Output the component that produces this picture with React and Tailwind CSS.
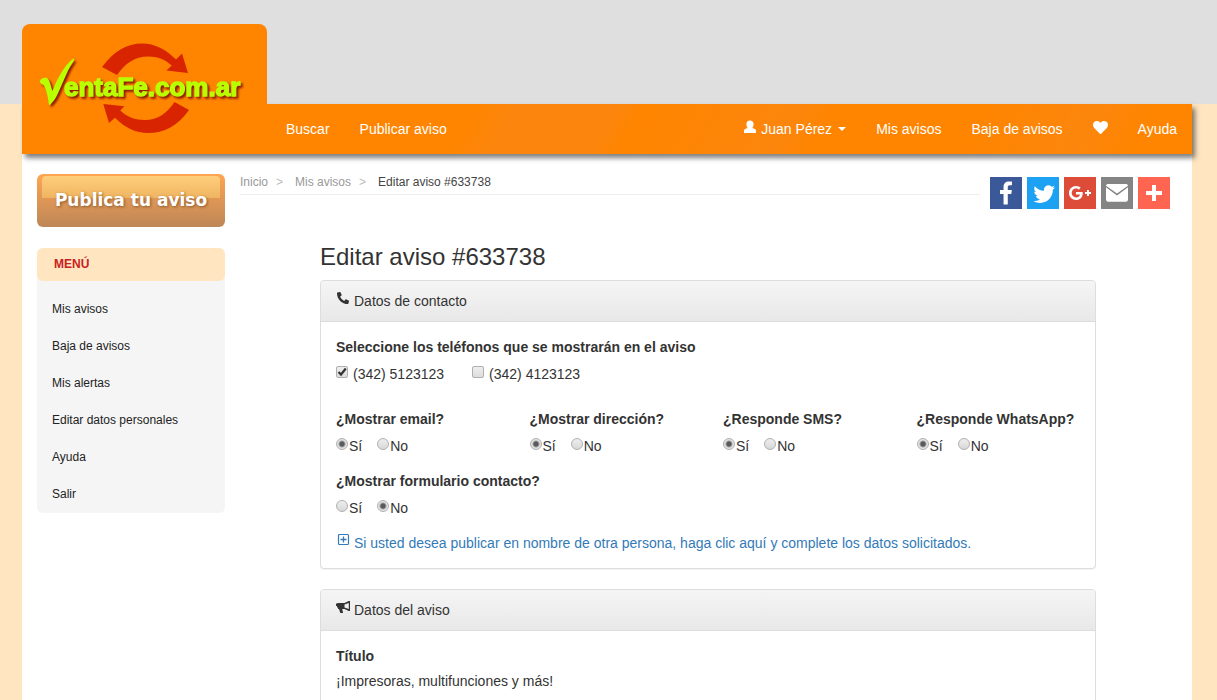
import { FaHeart, FaPhoneAlt } from "react-icons/fa";

const menu = ["Mis avisos", "Baja de avisos", "Mis alertas", "Editar datos personales", "Ayuda", "Salir"];

const share = [
  {
    name: "Facebook",
    color: "bg-[#3b5998]",
    box: "0 0 32 32",
    d: "M17.78 27.5V17.008h3.522l.527-4.09h-4.05v-2.61c0-1.182.33-1.99 2.023-1.99h2.166V4.66c-.375-.05-1.66-.16-3.155-.16-3.123 0-5.26 1.905-5.26 5.405v3.016h-3.53v4.09h3.53V27.5h4.223z",
  },
  {
    name: "Twitter",
    color: "bg-[#1da1f2]",
    box: "-3 -3 35.4 35.4",
    d: "M28 8.557a9.913 9.913 0 0 1-2.828.775 4.93 4.93 0 0 0 2.166-2.725 9.738 9.738 0 0 1-3.13 1.194 4.92 4.92 0 0 0-3.593-1.55 4.924 4.924 0 0 0-4.794 6.049c-4.09-.21-7.72-2.17-10.15-5.15a4.942 4.942 0 0 0-.665 2.477c0 1.71.87 3.214 2.19 4.1a4.968 4.968 0 0 1-2.23-.616v.06c0 2.39 1.7 4.38 3.952 4.83-.414.115-.85.174-1.297.174-.318 0-.626-.03-.928-.086a4.935 4.935 0 0 0 4.6 3.42 9.893 9.893 0 0 1-6.114 2.107c-.398 0-.79-.023-1.175-.068a13.953 13.953 0 0 0 7.55 2.213c9.056 0 14.01-7.507 14.01-14.013 0-.213-.005-.426-.015-.637.96-.695 1.795-1.56 2.455-2.55z",
  },
  {
    name: "Google+",
    color: "bg-[#dd4b39]",
    box: "0 0 32 32",
    d: "M27 15h-2v-2h-2v2h-2v2h2v2h2v-2h2m-15-2v2.4h3.97c-.16 1.03-1.2 3.02-3.97 3.02-2.39 0-4.34-1.98-4.34-4.42s1.95-4.42 4.34-4.42c1.36 0 2.27.58 2.79 1.08l1.9-1.83C15.47 9.69 13.89 9 12 9c-3.87 0-7 3.13-7 7s3.13 7 7 7c4.04 0 6.72-2.84 6.72-6.84 0-.46-.05-.81-.11-1.16H12z",
  },
  {
    name: "Email",
    color: "bg-[#848484]",
    box: "0 0 32 32",
    d: "M5 10.2V22.500a2.300 2.300 0 0 0 2.300 2.300h17.400a2.300 2.300 0 0 0 2.300-2.300V10.200l-11 8.400zM5 8.700l11 7.900 11-7.900C26.800 7.600 26 7 24.800 7H7.200C6 7 5.200 7.600 5 8.700z",
  },
  { name: "Compartir", color: "bg-[#ff6550]", box: "0 0 32 32", d: "M14 8h4v6h6v4h-6v6h-4v-6H8v-4h6z" },
];

function Logo() {
  return (
    <svg viewBox="0 0 245 130" className="block w-full h-full" role="img" aria-label="VentaFe.com.ar">
      <path fill="#d82400" d="M80 43C92 27 105 19.500 120 19.500c13 0 24 6 34 16l6-6 6 19.500-21.500-2.500 5.200-5C143 35.500 136 32.500 126 32.500c-13 0-23 7-31 18.500z" />
      <path fill="#d82400" d="M81.300 80l21 2.300-4 4.200C105 93 113 96 123 96c13 0 22-7 29.500-18l14.500 8c-11 16-25 23-41 23-12 0-23-5-33-15.300L87 99z" />
      <g className="[filter:drop-shadow(2px_2px_1px_#8b1a00)]">
        <path fill="#b9ff00" d="M18 57c0-2 5-4 7-3 3 2 4 9 5.500 13C35 55 43 41 50 35.500c1.500-1 2.500-1 2 .5-1 3-4 6-7 13-5 11-9 21-12 26-2 3-4 5-6 6.500-1-9-3-17-5.500-20.500-1.500-1-3.500-1-3.500-4z" />
        <text x="42" y="72" fill="#b9ff00" stroke="#b9ff00" strokeWidth="1.400" className="text-[26px] font-bold">entaFe.com.ar</text>
      </g>
    </svg>
  );
}

function UserIcon() {
  return (
    <svg viewBox="0 0 14 14" className="size-[14px]" fill="currentColor" aria-hidden="true">
      <path d="M7 .5c2.200 0 3.600 1.500 3.600 3.700 0 1.500-.5 2.800-1.300 3.700l2.700 1.200c.7.400 1 .9 1 1.600V13H1v-2.300c0-.7.300-1.200 1-1.600l2.700-1.200C3.900 7 3.400 5.700 3.400 4.200 3.400 2 4.800.5 7 .5z" />
    </svg>
  );
}

function BullhornIcon() {
  return (
    <svg viewBox="0 0 14 14" className="size-[14px]" fill="currentColor" aria-hidden="true">
      <path fillRule="evenodd" d="M14 1v10h-1.200L8.500 9H6.200l.9 4H4.300L3 9H2V7.500H1V6H0V3.500h1.500V3h7L12.800 1zM12.800 3 8.500 4.500v3l4.300 1.600z" />
    </svg>
  );
}

function PlusBoxIcon() {
  return (
    <svg viewBox="0 0 14 14" className="size-[14px]" fill="none" stroke="currentColor" aria-hidden="true">
      <rect x="2.500" y="1.500" width="10" height="10" rx="1" strokeWidth="1.200" />
      <path d="M7.500 3.500v6M4.500 6.500h6" strokeWidth="1.300" />
    </svg>
  );
}

function NavLink({ children, label }) {
  return (
    <a href="#" aria-label={label} className="flex items-center h-[50px] px-[15px] text-white">
      {children}
    </a>
  );
}

function Check({ children, checked }) {
  return (
    <label className="flex items-start gap-[5px]">
      <span className="relative mt-0.5 size-3">
        <input type="checkbox" defaultChecked={checked} className="peer block appearance-none size-3 rounded-xs border border-[#b0b0b0] bg-linear-to-b from-[#eee] to-[#ddd]" />
        <svg viewBox="0 0 12 12" className="hidden peer-checked:block absolute inset-0 pointer-events-none" fill="none" stroke="#333" strokeWidth="2.200">
          <path d="M2.500 6l2.500 2.500L9.800 2.500" />
        </svg>
      </span>
      {children}
    </label>
  );
}

function YesNo({ title, name, value = "Sí" }) {
  return (
    <fieldset className="px-[15px] pb-[15px]">
      <legend className="font-bold mb-[7px] whitespace-nowrap">{title}</legend>
      <div className="flex gap-[15px]">
        {["Sí", "No"].map((opt) => (
          <label key={opt} className="flex items-start gap-px">
            <input
              type="radio"
              name={name}
              defaultChecked={opt === value}
              className="appearance-none mt-0.5 size-3 rounded-full border border-[#b0b0b0] bg-linear-to-b from-[#eee] to-[#d8d8d8] checked:bg-[radial-gradient(circle,#5a5a5a_2px,#e4e4e4_4px)]"
            />
            {opt}
          </label>
        ))}
      </div>
    </fieldset>
  );
}

function Panel({ icon, title, children }) {
  return (
    <section className="mb-5 bg-white border border-[#ddd] rounded shadow-[0_1px_1px_rgba(0,0,0,0.05)]">
      <h2 className="flex items-start gap-1 px-[15px] py-[10px] rounded-t border-b border-[#ddd] bg-linear-to-b from-[#f5f5f5] to-[#e8e8e8]">
        {icon}
        {title}
      </h2>
      <div className="p-[15px]">{children}</div>
    </section>
  );
}

export default function App() {
  return (
    <div className="min-h-screen flex flex-col overflow-x-clip bg-[#ffe6c1] text-[#333] text-[14px] leading-5 font-['Liberation_Sans',Arial,sans-serif]">
      <div className="h-[104px] bg-[#dfdfdf]" />
      <div className="flex-1 pl-[22px] pr-[25px] flex flex-col">
        <header className="relative z-10 flex items-start h-[50px] shadow-[3px_4px_5px_rgba(0,0,0,0.5)] bg-[linear-gradient(120deg,#ff8500_38%,#fc860d_41%_50%,#ff8500_52%,#fc860d_65%,#ff8500_68%_80%,#fc860d_90%,#ff8500_95%)]">
          <a href="#" className="w-[245px] h-[130px] -mt-20 rounded-t-lg bg-[#ff8500]">
            <Logo />
          </a>
          <nav className="flex flex-1 justify-between pl-1">
            <div className="flex">
              <NavLink>Buscar</NavLink>
              <NavLink>Publicar aviso</NavLink>
            </div>
            <div className="flex">
              <button type="button" className="flex items-center h-[50px] px-[15px] gap-1 text-white">
                <span className="pb-1"><UserIcon /></span>
                Juan Pérez
                <span className="ml-0.5 border-x-4 border-t-4 border-x-transparent border-t-white" />
              </button>
              <NavLink>Mis avisos</NavLink>
              <NavLink>Baja de avisos</NavLink>
              <NavLink label="Favoritos"><FaHeart className="mb-1" size={15} /></NavLink>
              <NavLink>Ayuda</NavLink>
            </div>
          </nav>
        </header>

        <div className="flex-1 flex items-start gap-[15px] bg-white px-[15px] pt-5">
          <aside className="w-[188px] shrink-0">
            <button type="button" className="block w-full h-[53px] px-[5px] py-0.5 rounded-md bg-linear-to-b from-[#ffa552] to-[#bd8757]">
              <span className="block h-full rounded bg-[linear-gradient(#ffcf7c,#efb461)] bg-[length:100%_22px] bg-no-repeat text-white text-[17px] leading-[48px] font-bold font-['DejaVu_Sans',sans-serif] [text-shadow:1px_1px_3px_#8a5a2a]">
                Publica tu aviso
              </span>
            </button>
            <div className="mt-[21px] rounded-md bg-[#f5f5f5] text-[12px] text-[#222]">
              <h3 className="h-[33px] px-[17px] leading-8 rounded-md bg-[#ffe6c1] text-[#c9211e] font-bold">MENÚ</h3>
              <ul className="pt-[10px]">
                {menu.map((item) => (
                  <li key={item}>
                    <a href="#" className="block px-[15px] leading-[37px]">{item}</a>
                  </li>
                ))}
              </ul>
            </div>
          </aside>

          <main className="flex-1 min-w-0">
            <div className="flex items-start gap-[10px] pr-[7px]">
              <ol className="flex-1 flex h-[21px] leading-4 border-b border-[#eee] text-[12px] text-[#999]">
                <li><a href="#">Inicio</a><span className="pl-2 pr-3 text-[#bbb]">&gt;</span></li>
                <li><a href="#">Mis avisos</a><span className="pl-2 pr-3 text-[#bbb]">&gt;</span></li>
                <li className="text-[#444]">Editar aviso #633738</li>
              </ol>
              <div className="flex gap-[5px] pt-[3px]">
                {share.map((s) => (
                  <a key={s.name} href="#" aria-label={s.name} className={s.color}>
                    <svg viewBox={s.box} className="block size-8" fill="#fff">
                      <path d={s.d} />
                    </svg>
                  </a>
                ))}
              </div>
            </div>

            <div className="pl-20 pr-[81px] pt-[35px]">
              <h1 className="text-[24px] leading-[26px] mb-[10px]">Editar aviso #633738</h1>

              <Panel icon={<FaPhoneAlt className="mt-px mx-px" size={12} />} title="Datos de contacto">
                <fieldset>
                  <legend className="font-bold mb-[7px]">Seleccione los teléfonos que se mostrarán en el aviso</legend>
                  <div className="flex gap-7">
                    <Check checked>(342) 5123123</Check>
                    <Check>(342) 4123123</Check>
                  </div>
                </fieldset>
                <div className="grid grid-cols-4 -mx-[15px] mt-[25px]">
                  <YesNo title="¿Mostrar email?" name="email" />
                  <YesNo title="¿Mostrar dirección?" name="direccion" />
                  <YesNo title="¿Responde SMS?" name="sms" />
                  <YesNo title="¿Responde WhatsApp?" name="whatsapp" />
                  <YesNo title="¿Mostrar formulario contacto?" name="formulario" value="No" />
                </div>
                <a href="#" className="flex items-start gap-1 text-[#337ab7]">
                  <PlusBoxIcon />
                  Si usted desea publicar en nombre de otra persona, haga clic aquí y complete los datos solicitados.
                </a>
              </Panel>

              <Panel icon={<BullhornIcon />} title="Datos del aviso">
                <h4 className="font-bold mb-[5px]">Título</h4>
                <p>¡Impresoras, multifunciones y más!</p>
              </Panel>
            </div>
          </main>
        </div>
      </div>
    </div>
  );
}
